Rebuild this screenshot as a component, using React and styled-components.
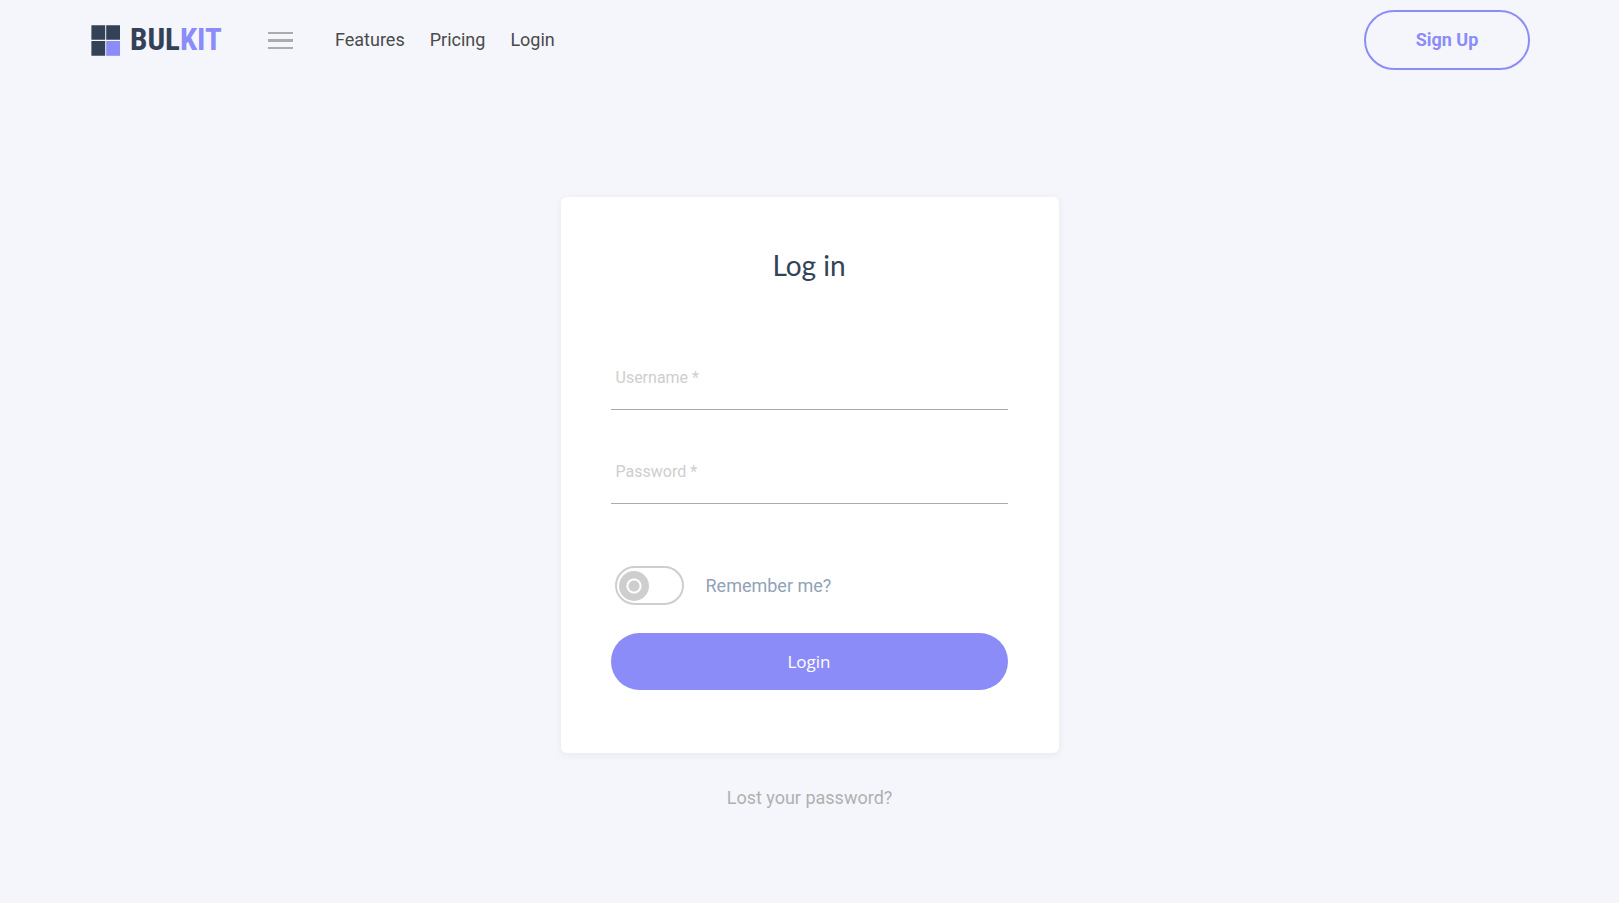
import React, { useState } from 'react';
import styled, { createGlobalStyle } from 'styled-components';

const links = ['Features', 'Pricing', 'Login'];

const App = () => {
  const [remember, setRemember] = useState(false);

  return (
    <>
      <GlobalStyle />
      <Navbar>
        <Brand href="#home">
          <LogoMark viewBox="0 0 30 32" aria-hidden="true">
            <path fill="#344258" d="M.4 1.2h13.8v14.6H.4zM15.2 1.2H29v14.6H15.2zM.4 17h13.8v14.8H.4z" />
            <path fill="#8c8cf9" d="M15.2 17H29v14.8H15.2z" />
          </LogoMark>
          <LogoText>
            BUL<span>KIT</span>
          </LogoText>
        </Brand>
        <MenuButton type="button" aria-label="Menu">
          <Bar $height={2} />
          <Bar $height={3} />
          <Bar $height={2} />
        </MenuButton>
        <Nav>
          {links.map(link => (
            <NavLink key={link} href={`#${link.toLowerCase()}`}>
              {link}
            </NavLink>
          ))}
        </Nav>
        <SignUp type="button">Sign Up</SignUp>
      </Navbar>

      <Main>
        <Card onSubmit={e => e.preventDefault()}>
          <Title>Log in</Title>
          <Input type="text" placeholder="Username *" aria-label="Username" />
          <Input type="password" placeholder="Password *" aria-label="Password" />
          <Remember>
            <Switch
              type="checkbox"
              checked={remember}
              onChange={e => setRemember(e.target.checked)}
            />
            Remember me?
          </Remember>
          <Submit type="submit">Login</Submit>
        </Card>
        <LostPassword href="#lost">Lost your password?</LostPassword>
      </Main>
    </>
  );
};

export default App;

const GlobalStyle = createGlobalStyle`
  * {
    box-sizing: border-box;
  }
  body {
    margin: 0;
    min-height: 100vh;
    background-color: #f4f6fb;
    color: #4a4a4a;
    font-family: Roboto, sans-serif;
    font-size: 18px;
    line-height: 24px;
  }
  a {
    text-decoration: none;
  }
  button,
  input {
    font-family: inherit;
  }
`;

const Navbar = styled.header`
  display: flex;
  align-items: center;
  height: 80px;
  padding: 0 89px 0 91px;
`;

const Brand = styled.a`
  display: flex;
  align-items: center;
  gap: 9px;
  width: 177px;
`;

const LogoMark = styled.svg`
  width: 30px;
  height: 32px;
`;

const LogoText = styled.span`
  color: #344258;
  font-family: 'Roboto Condensed', 'Liberation Sans Narrow', sans-serif;
  font-size: 31px;
  font-weight: 700;
  line-height: 32px;
  span {
    color: #8c8cf9;
  }
`;

const MenuButton = styled.button`
  display: flex;
  flex-direction: column;
  gap: 5px;
  width: 25px;
  padding: 0;
  border: 0;
  background: none;
  cursor: pointer;
`;

const Bar = styled.span`
  height: ${props => props.$height}px;
  background-color: #a9abac;
`;

const Nav = styled.nav`
  display: flex;
  gap: 25px;
  margin-left: 42px;
`;

const NavLink = styled.a`
  color: #4a4a4a;
`;

const SignUp = styled.button`
  width: 166px;
  height: 60px;
  margin-left: auto;
  padding: 0 0 2px;
  border: 2px solid #8c8cf9;
  border-radius: 30px;
  background: none;
  color: #8c8cf9;
  font-size: 18px;
  font-weight: 700;
  cursor: pointer;
`;

const Main = styled.main`
  display: flex;
  flex-direction: column;
  align-items: center;
  padding: 117px 16px 32px;
`;

const Card = styled.form`
  display: flex;
  flex-direction: column;
  width: 100%;
  max-width: 498px;
  padding: 50px 51px 63px 50px;
  border-radius: 6px;
  background-color: #fff;
  box-shadow: 0 2px 8px rgba(0, 0, 0, 0.06);
`;

const Title = styled.h1`
  margin: 0 0 71px;
  color: #344258;
  font-family: Lato, sans-serif;
  font-size: 28px;
  font-weight: 400;
  line-height: 36px;
  text-align: center;
`;

const Input = styled.input`
  height: 56px;
  margin-bottom: 38px;
  padding: 0 5px 8px;
  border: 0;
  border-bottom: 1px solid #a9abac;
  background: none;
  color: #4a4a4a;
  font-size: 16px;
  outline: none;
  &::placeholder {
    color: #cecece;
    opacity: 1;
  }
`;

const Remember = styled.label`
  display: flex;
  align-items: center;
  gap: 22px;
  margin: 24px 0 28px 4px;
  color: #92a2b7;
`;

const Switch = styled.input`
  display: flex;
  align-items: center;
  width: 69px;
  height: 39px;
  margin: 0;
  padding: 0 2px;
  border: 2px solid #cecece;
  border-radius: 20px;
  appearance: none;
  cursor: pointer;
  &::before {
    content: '';
    width: 30px;
    height: 30px;
    border-radius: 50%;
    background: radial-gradient(circle, #cecece 5px, #fff 6px, #fff 7px, #cecece 8px);
  }
  &:checked {
    justify-content: flex-end;
    border-color: #8c8cf9;
  }
`;

const Submit = styled.button`
  height: 57px;
  border: 0;
  border-radius: 29px;
  background-color: #8c8cf9;
  color: #fff;
  && {
    font-family: 'Open Sans', sans-serif;
  }
  font-size: 17px;
  cursor: pointer;
`;

const LostPassword = styled.a`
  margin-top: 33px;
  color: #b0b0b0;
`;
